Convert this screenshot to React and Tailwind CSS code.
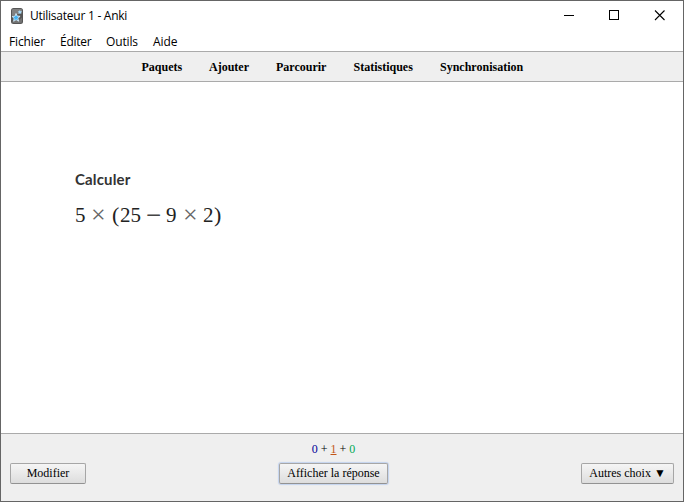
function AnkiIcon() {
  return (
    <svg width="14" height="16" viewBox="0 0 14 16" className="-ml-px block shrink-0">
      <rect x="1" width="12" height="16" rx="2.500" fill="#555" />
      <path d="M2 2q0-1 1-1h8q1 0 1 1v3L2 8z" fill="#808080" />
      <path d="M2 13.500c4 0 7-1 10-4v4q0 1.500-1.500 1.500h-7q-1.500 0-1.500-1.500z" fill="#737373" />
      <path d="M6 5.500l1.200 2.600 2.900.2-2.200 2 .8 2.900-2.600-1.400-2.500 1.500.5-2.900-2-1.900 2.900-.4z" fill="#45b3f2" stroke="#e5f5ff" strokeWidth=".8" />
      <path d="M9.800 2l.7 1.200 1.500.1-1 1.100.3 1.500-1.400-.6-1.300.7.100-1.500-1-1 1.500-.3z" fill="#a9dcfa" />
    </svg>
  );
}

function MenuBar() {
  return (
    <nav className="flex h-[21px] pl-2 text-[12px] leading-[23px] text-black">
      <span className="w-[51px] tracking-[-0.15px]">Fichier</span>
      <span className="w-[46px] tracking-[-0.25px]">Éditer</span>
      <span className="w-[47px] tracking-[-0.15px]">Outils</span>
      <span className="tracking-[-0.09px]">Aide</span>
    </nav>
  );
}

function Toolbar() {
  return (
    <nav className="flex h-[31px] border-y border-[#aaa] bg-[#efefef] pl-[140.500px] font-['Liberation_Serif',serif] text-[12px] leading-[30px] font-bold text-black">
      <span className="w-[67.500px]">Paquets</span>
      <span className="w-[67px]">Ajouter</span>
      <span className="w-[77.500px]">Parcourir</span>
      <span className="w-[86.500px]">Statistiques</span>
      <span>Synchronisation</span>
    </nav>
  );
}

function Formula() {
  return (
    <div className="mt-[10px] flex h-[32px] items-center font-['Liberation_Serif',serif] text-[21px] leading-[32px] text-[#222]">
      <span className="w-[16px]">5</span>
      <span className="w-[21px] text-[26px] text-[#666]">×</span>
      <span className="w-[8px] text-[22px]">(</span>
      <span className="w-[26px]">25</span>
      <span className="w-[20px] text-[27px] text-[#444]">−</span>
      <span className="w-[17px]">9</span>
      <span className="w-[20px] text-[26px] text-[#666]">×</span>
      <span className="w-[11px]">2</span>
      <span className="text-[22px]">)</span>
    </div>
  );
}

const button = "h-[21px] rounded-[2px] border border-[#a6a6a6] border-b-[#929292] bg-linear-to-b from-[#f5f5f5] to-[#dddddd] text-center text-[12px] leading-[19px] whitespace-nowrap text-black";

export default function App() {
  return (
    <div className="flex h-[502px] w-[684px] flex-col overflow-hidden border border-[#656565] bg-white font-['Open_Sans',sans-serif]">
      <header className="flex h-[29px] shrink-0 items-center pl-[10px]">
        <AnkiIcon />
        <span className="ml-[6px] text-[12px] tracking-[-0.25px] text-black">Utilisateur 1 - Anki</span>
        <div className="ml-auto flex items-center pr-[18px]">
          <svg width="101" height="11" viewBox="0 0 101 11" fill="none" stroke="#000" shapeRendering="crispEdges">
            <path d="M0 5.500h10M45.500.5h9v9h-9z" />
            <path d="M91 .5l9.500 9.500M100.500 .5l-9.500 9.500" shapeRendering="auto" strokeWidth="1.100" />
          </svg>
        </div>
      </header>
      <MenuBar />
      <Toolbar />
      <main className="h-[351px] pt-[87px] pl-[74px]">
        <p className="font-[Lato,sans-serif] text-[15px] leading-5 font-bold tracking-[0.15px] text-[#333]">Calculer</p>
        <Formula />
      </main>
      <footer className="flex-1 border-t border-[#aaa] bg-[#efefef] px-[9px] pt-[6px] font-['Liberation_Serif',serif]">
        <div className="pr-[17px] text-center text-[12px] leading-[18px] text-black">
          <span className="text-[#000099]">0</span> + <u className="text-[#c35617]">1</u> + <span className="text-[#00aa55]">0</span>
        </div>
        <div className="mt-[5px] flex">
          <button className={button + " w-[76px]"}>Modifier</button>
          <button className={button + " ml-[193px] w-[109px] border-[#8593b0] shadow-[0_0_1px_1px_#c3d3ef]"}>Afficher la réponse</button>
          <button className={button + " ml-auto w-[93px]"}>Autres choix ▼</button>
        </div>
      </footer>
    </div>
  );
}
